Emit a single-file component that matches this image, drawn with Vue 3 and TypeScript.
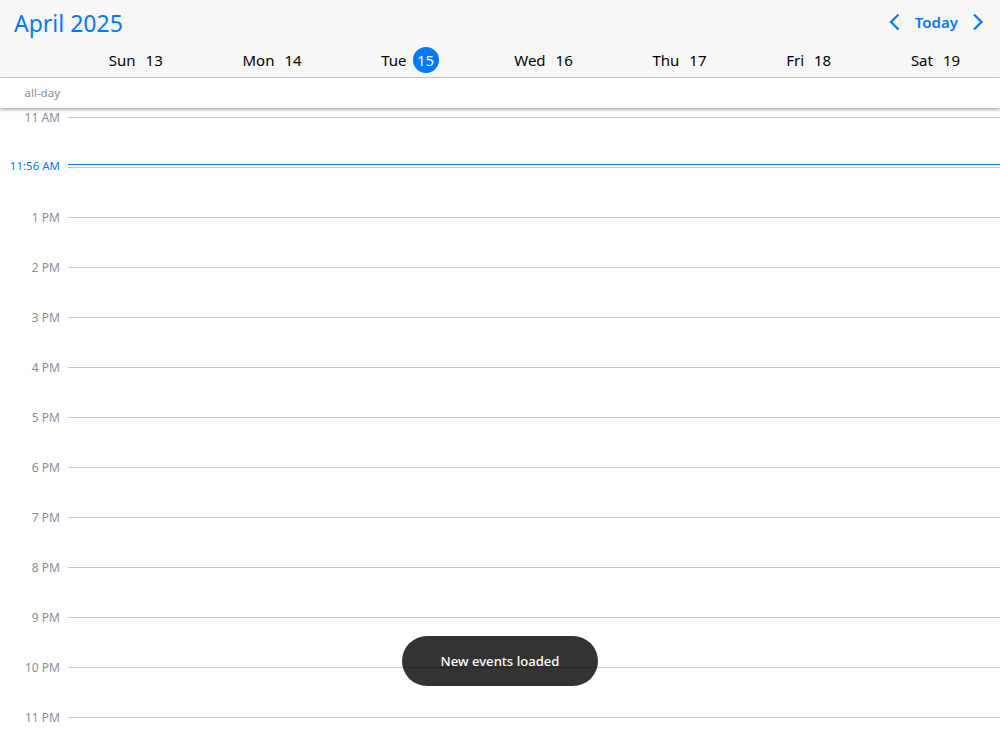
<script setup lang="ts">
const days = [
  { name: 'Sun', date: 13 },
  { name: 'Mon', date: 14 },
  { name: 'Tue', date: 15, today: true },
  { name: 'Wed', date: 16 },
  { name: 'Thu', date: 17 },
  { name: 'Fri', date: 18 },
  { name: 'Sat', date: 19 },
]
const hours = ['11 AM', '', '1 PM', '2 PM', '3 PM', '4 PM', '5 PM', '6 PM', '7 PM', '8 PM', '9 PM', '10 PM', '11 PM']
</script>

<template>
  <div class="calendar">
    <header class="header">
      <div class="toolbar">
        <h1 class="title">April 2025</h1>
        <nav class="nav">
          <svg class="chevron" width="12" height="18" viewBox="0 0 12 18" aria-label="Previous">
            <path d="M9.5 1.5 2 9l7.5 7.5" />
          </svg>
          <span class="today-btn">Today</span>
          <svg class="chevron" width="12" height="18" viewBox="0 0 12 18" aria-label="Next">
            <path d="M2 1.5 9.5 9 2 16.5" />
          </svg>
        </nav>
      </div>
      <div class="days">
        <div v-for="d in days" :key="d.date" class="day">
          <span>{{ d.name }}</span>
          <span class="date" :class="{ today: d.today }">{{ d.date }}</span>
        </div>
      </div>
    </header>
    <div class="allday">
      <span class="allday-label">all-day</span>
    </div>
    <main class="scroller">
      <div class="grid">
        <div v-for="(h, i) in hours" :key="i" class="hour">
          <span class="hour-label">{{ h }}</span>
          <span class="hour-line"></span>
        </div>
        <div class="now">
          <span class="now-label">11:56 AM</span>
          <span class="now-line"></span>
        </div>
      </div>
    </main>
    <div class="toast">New events loaded</div>
  </div>
</template>

<style>
html, body { margin: 0; padding: 0; background: #fff; }
</style>

<style scoped>
.calendar {
  position: relative;
  width: 1000px;
  height: 750px;
  overflow: hidden;
  display: flex;
  flex-direction: column;
  font-family: "Noto Sans", "Open Sans", sans-serif;
  background: #fff;
}
.header {
  background: #f7f7f7;
  border-bottom: 1px solid #c8c8c8;
  height: 77px;
  flex: none;
  display: flex;
  flex-direction: column;
}
.toolbar {
  height: 46px;
  flex: none;
  display: flex;
  align-items: flex-start;
  justify-content: space-between;
  padding: 0 16px 0 14px;
}
.title {
  margin: 0;
  font-size: 23px;
  font-weight: 400;
  color: #007aff;
  line-height: 47px;
}
.nav {
  display: flex;
  align-items: center;
  gap: 14px;
  height: 44px;
  color: #007aff;
}
.chevron {
  display: block;
  fill: none;
  stroke: #007aff;
  stroke-width: 2.2;
}
.today-btn {
  font-size: 15px;
  font-weight: 600;
}
.days {
  display: flex;
  justify-content: space-around;
  padding-left: 69px;
  height: 28px;
}
.day {
  display: flex;
  align-items: center;
  font-size: 15px;
  color: #000;
}
.date {
  margin-left: 10px;
  line-height: 26px;
}
.date.today {
  margin: 0 -4px 0 6px;
  padding: 0 4px;
  min-width: 18px;
  height: 26px;
  border-radius: 13px;
  text-align: center;
  background: #007aff;
  color: #fff;
}
.allday {
  height: 30px;
  flex: none;
  display: flex;
  align-items: center;
  justify-content: flex-end;
  width: 60px;
  position: relative;
  z-index: 2;
}
.allday::after {
  content: "";
  position: absolute;
  left: 0;
  top: 0;
  width: 1000px;
  height: 30px;
  box-shadow: 0 2px 3px rgba(0, 0, 0, 0.3);
  z-index: -1;
  background: #fff;
}
.allday-label {
  font-size: 11.5px;
  color: #8e8e93;
  margin-top: -1px;
}
.scroller {
  flex: 1;
  overflow: hidden;
}
.grid {
  position: relative;
  margin-top: -40px;
}
.hour {
  height: 50px;
  display: flex;
  align-items: flex-end;
}
.hour-label {
  width: 60px;
  flex: none;
  text-align: right;
  font-size: 12px;
  line-height: 16px;
  margin-bottom: -8px;
  color: #8e8e93;
}
.hour-line {
  margin-left: 8px;
  flex: 1;
  height: 1px;
  background: #c8c8c8;
}
.now {
  position: absolute;
  left: 0;
  right: 0;
  top: 96px;
  display: flex;
  align-items: center;
  height: 1px;
}
.now-label {
  width: 60px;
  flex: none;
  text-align: right;
  font-size: 11.5px;
  padding-top: 2px;
  color: #007aff;
}
.now-line {
  margin-left: 8px;
  flex: 1;
  height: 1px;
  background: #007aff;
}
.toast {
  position: absolute;
  left: 402px;
  top: 636px;
  width: 196px;
  height: 50px;
  border-radius: 25px;
  background: rgba(0, 0, 0, 0.8);
  color: #fff;
  font-size: 13.1px;
  font-weight: 500;
  display: flex;
  align-items: center;
  justify-content: center;
}
</style>
